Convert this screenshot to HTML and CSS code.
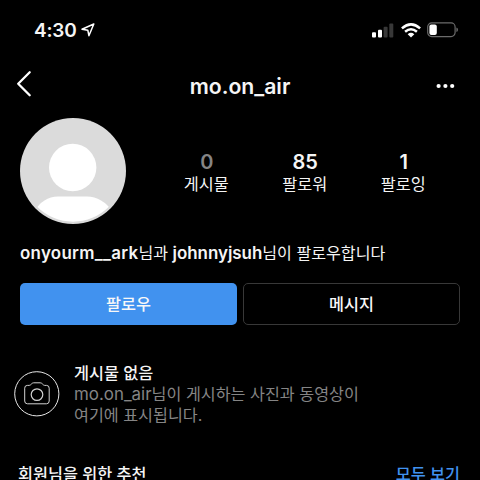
FILE: index.html
```html
<!DOCTYPE html>
<html lang="ko">
<head>
<meta charset="utf-8">
<title>mo.on_air</title>
<link rel="stylesheet" href="styles.css">
</head>
<body>
<div class="screen">
  <div class="status">
    <span class="time">4:30</span>
    <svg class="location" width="14" height="14" viewBox="0 0 14 14"><path d="M12.8 1 1 6.2 6.8 7.2 7.9 12.7Z" fill="none" stroke="#fff" stroke-width="1.5" stroke-linejoin="round"/></svg>
    <svg class="signal" width="22" height="15" viewBox="0 0 22 15"><rect x="0" y="9.3" width="4" height="5.2" rx="1" fill="#fff"/><rect x="6" y="6.7" width="4" height="7.8" rx="1" fill="#fff"/><rect x="11.6" y="3.7" width="4" height="10.8" rx="1" fill="#383838"/><rect x="17.3" y="0.5" width="4" height="14" rx="1" fill="#383838"/></svg>
    <svg class="wifi" width="20" height="15" viewBox="0 0 20 15"><g fill="none" stroke="#fff" stroke-width="2.5"><path d="M.9 5.4Q10-2.6 19.1 5.4"/><path d="M4.1 8.8Q10 3.7 15.9 8.8"/></g><path d="M6.7 11.2Q10 8.5 13.3 11.2L10 14.5Z" fill="#fff"/></svg>
    <svg class="battery" width="31" height="16" viewBox="0 0 31 16"><rect x=".7" y=".9" width="27.4" height="13.7" rx="4" fill="none" stroke="#6b6b6b" stroke-width="1.2"/><rect x="2.4" y="2.6" width="7.4" height="10.3" rx="2" fill="#fff"/><path d="M29.4 5.5Q31 6 31 7.8T29.4 10Z" fill="#6b6b6b"/></svg>
  </div>

  <header class="nav">
    <svg class="back" width="16" height="28" viewBox="0 0 16 28"><path d="M13.7 2.2 2.2 13.7 13.7 25.2" fill="none" stroke="#fff" stroke-width="2.3" stroke-linecap="round" stroke-linejoin="round"/></svg>
    <h1 class="title">mo.on_air</h1>
    <svg class="more" width="20" height="6" viewBox="0 0 20 6"><g fill="#fff"><circle cx="3.6" cy="3" r="2.1"/><circle cx="10.4" cy="3" r="2.1"/><circle cx="17.2" cy="3" r="2.1"/></g></svg>
  </header>

  <section class="profile">
    <svg class="avatar" width="106" height="106" viewBox="0 0 106 106"><defs><clipPath id="body"><circle cx="53" cy="53" r="50.7"/></clipPath></defs><circle cx="53" cy="53" r="53" fill="#dbdbdb"/><circle cx="52.7" cy="49.5" r="23.7" fill="#fff"/><path clip-path="url(#body)" d="M14 106V94Q23 78.5 38 78.5H67Q82 78.5 93 94V106Z" fill="#fff"/></svg>
    <div class="stats">
      <div class="stat"><b class="count muted">0</b><span class="label">게시물</span></div>
      <div class="stat"><b class="count">85</b><span class="label">팔로워</span></div>
      <div class="stat"><b class="count">1</b><span class="label">팔로잉</span></div>
    </div>
  </section>

  <p class="mutual"><b class="wide">onyourm__ark</b>님과 <b>johnnyjsuh</b>님이 팔로우합니다</p>

  <div class="actions">
    <button class="btn follow">팔로우</button>
    <button class="btn message">메시지</button>
  </div>

  <section class="empty">
    <svg class="camera" width="46" height="46" viewBox="0 0 46 46"><g fill="none" stroke="#d2d2d2" stroke-width="1"><circle cx="22.8" cy="22.8" r="22.1" stroke="#e8e8e8"/><path d="M13.3 14.4H15.2C17 14.4 17.5 11.8 19.7 11.8H26.2C28.4 11.8 28.9 14.4 30.7 14.4H32.5Q35.2 14.4 35.2 17.2V30Q35.2 32.8 32.4 32.8H13.5Q10.7 32.8 10.7 30V17.2Q10.7 14.4 13.3 14.4Z"/><circle cx="23" cy="23.6" r="5.8" stroke-width="1.2"/></g></svg>
    <div class="empty-text">
      <h2 class="empty-title">게시물 없음</h2>
      <p class="empty-line"><span class="handle">mo.on_air</span>님이 게시하는 사진과 동영상이</p>
      <p class="empty-line">여기에 표시됩니다.</p>
    </div>
  </section>

  <div class="suggest">
    <h2 class="suggest-title">회원님을 위한 추천</h2>
    <a class="suggest-all">모두 보기</a>
  </div>
</div>
</body>
</html>
```
FILE: styles.css
```css
* { box-sizing: border-box; margin: 0; padding: 0; }
body {
  background: #000;
  color: #f5f5f5;
  font-family: Inter, "Noto Sans CJK KR", sans-serif;
  overflow: hidden;
}
svg { display: block; flex: none; }
.screen { width: 480px; height: 480px; overflow: hidden; background: #000; }

.status { display: flex; align-items: center; height: 60px; padding: 0 22px 0 34px; }
.time { font-size: 19px; font-weight: 600; line-height: 24px; width: 47px; padding-top: 2px; letter-spacing: -0.2px; }
.signal { margin-left: auto; }
.wifi { margin-left: 7px; }
.battery { margin-left: 6px; }

.nav { display: grid; grid-template-columns: 60px 1fr 60px; align-items: center; height: 50px; padding: 0 0 2px; }
.back { margin-left: 16px; }
.title { font-size: 21.2px; font-weight: 600; line-height: 26px; text-align: center; padding-top: 3px; }
.more { margin: 4px 0 0 15px; }

.profile { display: flex; margin: 8px 0 0 20px; height: 106px; }
.stats { display: grid; grid-template-columns: repeat(3, 98.5px); margin: 33px 0 0 31px; }
.stat { text-align: center; }
.count { display: block; font-size: 20px; font-weight: 600; line-height: 22px; padding-left: 1px; }
.count.muted { color: #858585; }
.label { display: block; font-size: 16.3px; line-height: 22px; }

.mutual { margin: 17px 0 0 20px; font-size: 16.1px; line-height: 24px; height: 24px; white-space: nowrap; }
.mutual b { font-size: 16.9px; font-weight: 600; }
.mutual .wide { letter-spacing: 0.3px; }

.actions { display: flex; gap: 6px; margin: 18px 0 0 20px; }
.btn {
  width: 217px;
  height: 42px;
  border: 0;
  border-radius: 5px;
  color: #f8f8f8;
  background: #4192ef;
  font-family: inherit;
  font-size: 16.3px;
  font-weight: 500;
  line-height: 24px;
}
.message { background: #000; border: 1px solid #383838; }

.empty { display: flex; margin: 38px 0 0 14px; }
.camera { margin-top: 8px; }
.empty-text { margin-left: 14px; white-space: nowrap; }
.empty-title { font-size: 16.3px; font-weight: 500; line-height: 21px; }
.empty-line { font-size: 16.2px; line-height: 20.5px; height: 20.5px; color: #858585; }
.handle { font-size: 16.9px; }

.suggest { display: flex; justify-content: space-between; margin: 37px 20px 0 18px; white-space: nowrap; }
.suggest-title { font-size: 16.3px; font-weight: 500; line-height: 24px; }
.suggest-all { font-size: 16.3px; font-weight: 500; line-height: 24px; color: #4192ef; }
```
